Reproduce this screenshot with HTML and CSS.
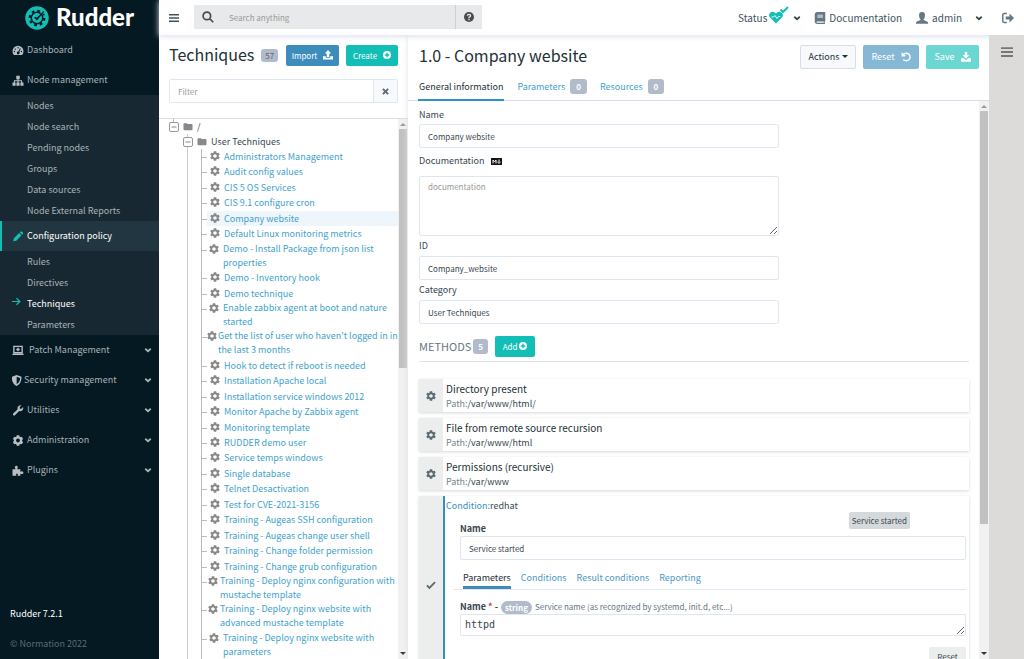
FILE: index.html
```html
<!DOCTYPE html>
<html lang="en">
<head>
<meta charset="utf-8">
<title>Rudder - Techniques</title>
<link rel="stylesheet" href="styles.css">
</head>
<body>
<svg class="sprite" aria-hidden="true">
  <symbol id="cog" viewBox="0 0 512 512"><path d="M487.4 315.7l-42.6-24.6c4.3-23.2 4.3-47 0-70.2l42.6-24.6c4.9-2.8 7.1-8.6 5.5-14-11.1-35.6-30-67.8-54.7-94.6-3.8-4.1-10-5.1-14.8-2.3L380.8 110c-17.9-15.4-38.5-27.3-60.8-35.1V25.8c0-5.6-3.9-10.5-9.4-11.7-36.7-8.2-74.3-7.8-109.2 0-5.5 1.2-9.4 6.1-9.4 11.7V75c-22.2 7.9-42.8 19.8-60.8 35.1L88.7 85.5c-4.9-2.8-11-1.9-14.8 2.3-24.7 26.7-43.6 58.9-54.7 94.6-1.7 5.4.6 11.2 5.5 14L67.3 221c-4.3 23.2-4.3 47 0 70.2l-42.6 24.6c-4.9 2.8-7.1 8.6-5.5 14 11.1 35.6 30 67.8 54.7 94.6 3.8 4.1 10 5.1 14.8 2.3l42.6-24.6c17.9 15.4 38.5 27.3 60.8 35.1v49.2c0 5.6 3.9 10.5 9.4 11.7 36.7 8.2 74.3 7.8 109.2 0 5.5-1.2 9.4-6.1 9.4-11.7v-49.2c22.2-7.9 42.8-19.8 60.8-35.1l42.6 24.6c4.9 2.8 11 1.9 14.8-2.3 24.7-26.7 43.6-58.9 54.7-94.6 1.5-5.5-.7-11.3-5.6-14.1zM256 346c-50 0-90-40-90-90s40-90 90-90 90 40 90 90-40 90-90 90z"/></symbol>
  <symbol id="chevron" viewBox="0 0 16 16"><path d="M2.5 5.5 8 10.5l5.5-5" fill="none" stroke="currentColor" stroke-width="3.4"/></symbol>
  <symbol id="folder" viewBox="0 0 16 16"><path d="M0 3.600Q0 2 1.600 2h4Q7 2 7 3.600h7.400Q16 3.600 16 5v8q0 1.500-1.600 1.500H1.600Q0 14.500 0 13z"/></symbol>
  <symbol id="plus-circle" viewBox="0 0 16 16"><path fill-rule="evenodd" d="M8 0a8 8 0 1 0 0 16A8 8 0 0 0 8 0zM6.600 3.500h2.800v3.100h3.100v2.800H9.400v3.100H6.600V9.400H3.500V6.600h3.100z"/></symbol>
  <symbol id="bars" viewBox="0 0 16 16"><path d="M0 1.500h16v2.600H0zM0 6.700h16v2.600H0zM0 11.900h16v2.600H0z"/></symbol>
  <symbol id="toggle" viewBox="0 0 10 10"><rect x=".5" y=".5" width="9" height="9" rx="1.500" fill="#fff" stroke="#999"/><path d="M2.500 5h5" stroke="#888"/></symbol>
</svg>

<div class="app">
  <aside class="sidebar">
    <a class="brand" href="#">
      <svg class="brand-mark" viewBox="0 0 48 48"><circle cx="24" cy="24" r="23.500" fill="#13beb7"/><g fill="none" stroke="#041922"><circle cx="24" cy="24" r="14.500" stroke-width="4.500" stroke-dasharray="5.500 5.890"/><circle cx="24" cy="24" r="11.500" stroke-width="3"/></g><path d="M26 22 38 7l5 5z" fill="#13beb7"/><path d="m24 29-6-6 3-1.500 2.500 2L37 10l1.500 1.500L28 24z" fill="#041922"/></svg>
      <span>Rudder</span>
    </a>
    <nav class="menu">
      <a class="item" href="#"><svg class="ico" viewBox="0 0 16 16"><path fill-rule="evenodd" d="M2 14.500a8 8 0 1 1 12 0zM8 3a1 1 0 1 0 0 2 1 1 0 0 0 0-2zM4 5a1 1 0 1 0 0 2 1 1 0 0 0 0-2zM2.800 8.500a1 1 0 1 0 0 2 1 1 0 0 0 0-2zM13 8.500a1 1 0 1 0 0 2 1 1 0 0 0 0-2zM10.800 4.600 8.500 9.500a2 2 0 1 0 1.300.600l2.200-5z"/></svg><span>Dashboard</span></a>
      <a class="item" href="#"><svg class="ico" viewBox="0 0 16 16"><path d="M5.500 1h5v5H8.800v1.700H14V11h2v4.500h-4.500V11h1V9.200H8.800V11h1.500v4.500H5.700V11h1.500V9.200H3.500V11h1v4.500H0V11h2V7.700h5.200V6H5.500z"/></svg><span>Node management</span></a>
      <div class="submenu">
        <a href="#">Nodes</a><a href="#">Node search</a><a href="#">Pending nodes</a><a href="#">Groups</a><a href="#">Data sources</a><a href="#">Node External Reports</a>
      </div>
      <a class="item active" href="#"><svg class="ico" viewBox="0 0 16 16"><path d="m1 15 1-4.500L9.500 3 13 6.500 5.500 14zM10.500 2l1-1q1.200-1 2.400 0l1.200 1.200q1 1.200 0 2.300l-1 1z"/></svg><span>Configuration policy</span></a>
      <div class="submenu">
        <a href="#">Rules</a><a href="#">Directives</a><a class="current" href="#"><svg viewBox="0 0 16 16"><path d="M0 8h14M8 2l6 6-6 6" fill="none" stroke="currentColor" stroke-width="2.200"/></svg>Techniques</a><a href="#">Parameters</a>
      </div>
      <a class="item" href="#"><svg class="ico" viewBox="0 0 16 16"><path d="M2 2h12v9H2zM0 13.500h16M8 4v5M5.500 6.500h5" fill="none" stroke="currentColor" stroke-width="2"/></svg><span class="spaced">Patch Management</span><svg class="chev"><use href="#chevron"/></svg></a>
      <a class="item snug" href="#"><svg class="ico" viewBox="2 0 13 16"><path fill-rule="evenodd" d="M8 0l7 2.500Q15.500 12 8 16 .5 12 1 2.500zM8 2.500v11Q13 10 13 4.200z"/></svg><span>Security management</span><svg class="chev"><use href="#chevron"/></svg></a>
      <a class="item" href="#"><svg class="ico" viewBox="0 0 16 16"><path d="M1 12.500 7.300 6.700Q6.500 3.500 8.800 1.500 10.800 0 13 .6L10.500 3v2.500H13L15.500 3q.7 2.500-1 4.500-2 2-4.800 1.200L3.500 15q-1.200 1-2.300 0-1.200-1.300-.2-2.500z"/></svg><span>Utilities</span><svg class="chev"><use href="#chevron"/></svg></a>
      <a class="item" href="#"><svg class="ico"><use href="#cog"/></svg><span>Administration</span><svg class="chev"><use href="#chevron"/></svg></a>
      <a class="item" href="#"><svg class="ico" viewBox="0 0 16 16"><path d="M0 6h4.500Q3 4 3.500 2.500 4.500.7 6.300 1.200 8 2 7.500 4L6.800 6h4.700v4q2-1.500 3.500-.5 1.500 1.500.5 3-1.500 1.500-4 0V15.500H7.500q1-3-1-3t-1 3H0z"/></svg><span>Plugins</span><svg class="chev"><use href="#chevron"/></svg></a>
    </nav>
    <footer class="side-foot"><strong>Rudder 7.2.1</strong><span>© Normation 2022</span></footer>
  </aside>

  <div class="page">
    <header class="topbar">
      <button class="plain" type="button" aria-label="Toggle menu"><svg class="i10"><use href="#bars"/></svg></button>
      <form class="search">
        <label for="q" aria-label="Search"><svg class="i12" viewBox="0 0 16 16"><path d="M6.500 1.500a5 5 0 1 0 0 10 5 5 0 0 0 0-10zM10 10l5 5" fill="none" stroke="currentColor" stroke-width="2.300"/></svg></label>
        <input id="q" type="text" placeholder="Search anything">
        <button type="button" aria-label="Help"><svg class="i10" viewBox="0 0 16 16"><circle cx="8" cy="8" r="8"/><path d="M5.500 6Q5.500 3.700 8 3.700T10.500 6Q10.500 7.200 8 8.500V10M8 11v2.300" fill="none" stroke="#e8e9ea" stroke-width="2.200"/></svg></button>
      </form>
      <nav class="toplinks">
        <a class="status" href="#"><span>Status</span><svg viewBox="0 0 20 18"><path d="M7 17.500 1 11.500Q-.8 9 1 7 4 4.500 7 7.500 10 4.500 13 7q1.800 2 0 4.500z" fill="#13beb7"/><path d="M2.500 11h2L6 9.500l2 3 1.500-2H11.500" fill="none" stroke="#fff" stroke-width=".9"/><path d="m11.500 3.500 2.500 2.500L19 1" fill="none" stroke="#13beb7" stroke-width="2"/></svg><svg class="chev"><use href="#chevron"/></svg></a>
        <a class="docs" href="#"><svg class="i12" viewBox="0 0 16 16"><path fill-rule="evenodd" d="M4 0h11v12l-.7.800v1.700L15 16H4Q1 15.500 1 13V3Q1 .5 4 0zM4.500 3.500v1.200h7.500V3.500zM4.500 6v1.200h7.500V6zM4 12.500q-1.500.8 0 1.700h9v-1.700z"/></svg><span>Documentation</span></a>
        <a class="user" href="#"><svg class="i12" viewBox="0 0 16 16"><path d="M8 0q4 0 4 4.500 0 3-2 5v1q5 1.500 6 3v2H0v-2q1-1.500 6-3v-1q-2-2-2-5Q4 0 8 0z"/></svg><span>admin</span><svg class="chev"><use href="#chevron"/></svg></a>
        <a href="#" aria-label="Log out"><svg class="i12" viewBox="0 0 16 16"><path d="M6.500 2H3Q1 2 1 4v8q0 2 2 2h3.500" fill="none" stroke="currentColor" stroke-width="2"/><path d="M5 6h5V2l6 6-6 6v-4H5z"/></svg></a>
      </nav>
    </header>

    <div class="columns">
      <section class="techniques">
        <div class="tech-head">
          <h1>Techniques</h1><span class="count">57</span>
          <button class="btn blue" type="button">Import <svg class="i10" viewBox="0 0 16 16"><path d="M8 0l5 5.500H10V11H6V5.500H3zM0 10h4.500v2.500h7V10H16v5H0z"/></svg></button>
          <button class="btn teal" type="button">Create <svg class="i8"><use href="#plus-circle"/></svg></button>
        </div>
        <div class="filter"><input type="text" placeholder="Filter" aria-label="Filter techniques"><button type="button" aria-label="Clear filter"><svg viewBox="0 0 16 16"><path d="m2 2 12 12M14 2 2 14" stroke="currentColor" stroke-width="4.500"/></svg></button></div>
        <div class="scroller">
          <div class="tree">
            <div class="root"><button type="button" aria-label="Collapse /"><svg><use href="#toggle"/></svg></button><svg class="fold"><use href="#folder"/></svg><span>/</span></div>
            <div class="branch">
              <div class="root"><button type="button" aria-label="Collapse User Techniques"><svg><use href="#toggle"/></svg></button><svg class="fold"><use href="#folder"/></svg><span>User Techniques</span></div>
              <ul class="leaves">
                <li><svg><use href="#cog"/></svg><a href="#">Administrators Management</a></li>
                <li><svg><use href="#cog"/></svg><a href="#">Audit config values</a></li>
                <li><svg><use href="#cog"/></svg><a href="#">CIS 5 OS Services</a></li>
                <li><svg><use href="#cog"/></svg><a href="#">CIS 9.1 configure cron</a></li>
                <li class="selected"><svg><use href="#cog"/></svg><a href="#">Company website</a></li>
                <li><svg><use href="#cog"/></svg><a href="#">Default Linux monitoring metrics</a></li>
                <li class="wrap"><svg><use href="#cog"/></svg><a href="#">Demo - Install Package from json list properties</a></li>
                <li><svg><use href="#cog"/></svg><a href="#">Demo - Inventory hook</a></li>
                <li><svg><use href="#cog"/></svg><a href="#">Demo technique</a></li>
                <li class="wrap"><svg><use href="#cog"/></svg><a href="#">Enable zabbix agent at boot and nature started</a></li>
                <li class="wrap tightest"><svg><use href="#cog"/></svg><a href="#">Get the list of user who haven't logged in in the last 3 months</a></li>
                <li><svg><use href="#cog"/></svg><a href="#">Hook to detect if reboot is needed</a></li>
                <li><svg><use href="#cog"/></svg><a href="#">Installation Apache local</a></li>
                <li><svg><use href="#cog"/></svg><a href="#">Installation service windows 2012</a></li>
                <li><svg><use href="#cog"/></svg><a href="#">Monitor Apache by Zabbix agent</a></li>
                <li><svg><use href="#cog"/></svg><a href="#">Monitoring template</a></li>
                <li><svg><use href="#cog"/></svg><a href="#">RUDDER demo user</a></li>
                <li><svg><use href="#cog"/></svg><a href="#">Service temps windows</a></li>
                <li><svg><use href="#cog"/></svg><a href="#">Single database</a></li>
                <li><svg><use href="#cog"/></svg><a href="#">Telnet Desactivation</a></li>
                <li><svg><use href="#cog"/></svg><a href="#">Test for CVE-2021-3156</a></li>
                <li><svg><use href="#cog"/></svg><a href="#">Training - Augeas SSH configuration</a></li>
                <li><svg><use href="#cog"/></svg><a href="#">Training - Augeas change user shell</a></li>
                <li><svg><use href="#cog"/></svg><a href="#">Training - Change folder permission</a></li>
                <li><svg><use href="#cog"/></svg><a href="#">Training - Change grub configuration</a></li>
                <li class="wrap tight"><svg><use href="#cog"/></svg><a href="#">Training - Deploy nginx configuration with mustache template</a></li>
                <li class="wrap tight"><svg><use href="#cog"/></svg><a href="#">Training - Deploy nginx website with advanced mustache template</a></li>
                <li class="wrap"><svg><use href="#cog"/></svg><a href="#">Training - Deploy nginx website with parameters</a></li>
              </ul>
            </div>
          </div>
          <div class="bar" aria-hidden="true"><i class="up"></i><i class="thumb short"></i><i class="down"></i></div>
        </div>
      </section>

      <main class="detail">
        <div class="detail-head">
          <h1>1.0 - Company website</h1>
          <button class="btn tall light" type="button">Actions<i class="caret"></i></button>
          <button class="btn tall blue faded" type="button">Reset <svg class="i10" viewBox="0 0 16 16"><path d="M2 1v5h5M2.500 5.500Q5 2 8.500 2q5.500.3 6 6-.3 5.500-6 6-3 0-5-2" fill="none" stroke="currentColor" stroke-width="2.200"/></svg></button>
          <button class="btn tall teal faded" type="button">Save <svg class="i10" viewBox="0 0 16 16"><path d="M6 0h4v5h3.500L8 10.500 2.500 5H6zM0 10h4.500L8 13l3.500-3H16v5.500H0z"/></svg></button>
        </div>
        <nav class="tabs"><a class="on" href="#">General information</a><a href="#">Parameters <span class="count">0</span></a><a href="#">Resources <span class="count">0</span></a></nav>
        <div class="scroller">
          <div class="body">
            <form class="general">
              <label for="name">Name</label>
              <input id="name" type="text" value="Company website">
              <label for="doc">Documentation <svg class="md" viewBox="0 0 22 14"><rect width="22" height="14" rx="1"/><path d="M4 11V4l3 3.500L10 4v7M16 3v5M13 7.500l3 3.500 3-3.500" fill="none" stroke="#fff" stroke-width="2"/></svg></label>
              <textarea id="doc" placeholder="documentation"></textarea>
              <label for="tid">ID</label>
              <input id="tid" type="text" value="Company_website">
              <label for="cat">Category</label>
              <input id="cat" type="text" value="User Techniques">
            </form>
            <div class="methods-head"><h2>METHODS</h2><span class="count">5</span><button class="btn teal add" type="button">Add <svg class="i8"><use href="#plus-circle"/></svg></button></div>
            <div class="methods">
              <article class="method"><div class="handle"><svg class="i10"><use href="#cog"/></svg></div><div class="info"><h3>Directory present</h3><p><span>Path:</span>/var/www/html/</p></div></article>
              <article class="method"><div class="handle"><svg class="i10"><use href="#cog"/></svg></div><div class="info"><h3>File from remote source recursion</h3><p><span>Path:</span>/var/www/html</p></div></article>
              <article class="method"><div class="handle"><svg class="i10"><use href="#cog"/></svg></div><div class="info"><h3>Permissions (recursive)</h3><p><span>Path:</span>/var/www</p></div></article>
              <article class="method open">
                <div class="handle"><svg class="i10" viewBox="0 0 16 16"><path d="m1.500 8.500 4 4 9-9" fill="none" stroke="currentColor" stroke-width="3"/></svg></div>
                <div class="editor">
                  <p class="cond"><span>Condition:</span>redhat</p>
                  <div class="name-row"><label for="mname">Name</label><span class="tag">Service started</span></div>
                  <input id="mname" type="text" value="Service started">
                  <nav class="subtabs"><a class="on" href="#">Parameters</a><a href="#">Conditions</a><a href="#">Result conditions</a><a href="#">Reporting</a></nav>
                  <label class="param" for="svc"><b>Name <em>*</em> -</b><span class="pill">string</span><span class="hint">Service name (as recognized by systemd, init.d, etc...)</span></label>
                  <textarea id="svc" class="mono">httpd</textarea>
                  <button class="reset" type="button">Reset</button>
                </div>
              </article>
            </div>
          </div>
          <div class="bar" aria-hidden="true"><i class="up"></i><i class="thumb"></i><i class="down"></i></div>
        </div>
      </main>

      <aside class="rail"><button class="plain" type="button" aria-label="Open panel"><svg class="i12"><use href="#bars"/></svg></button></aside>
    </div>
  </div>
</div>
</body>
</html>
```
FILE: styles.css
```css
* { box-sizing: border-box; }
body, h1, h2, h3, p, ul { margin: 0; padding: 0; }
body, input, textarea, button { font-family: "Noto Sans CJK SC", "Open Sans", sans-serif; }
body { font-size: 9px; line-height: 14px; color: #36474f; background: #fff; }
a { color: inherit; text-decoration: none; }
button { cursor: pointer; }
svg { fill: currentColor; flex: none; }
.sprite { position: absolute; width: 0; height: 0; }
.i8 { width: 8px; height: 8px; }
.i10 { width: 10px; height: 10px; }
.i12 { width: 12px; height: 12px; }
.chev { width: 8px; height: 8px; }
.plain { border: 0; background: none; padding: 0; display: flex; color: #41545e; }

.app { display: flex; height: 100vh; overflow: hidden; }

/* Sidebar */
.sidebar { width: 159px; flex: none; display: flex; flex-direction: column; background: #041922; color: #a9b3b7; }
.brand { height: 35px; padding-left: 25px; display: flex; align-items: center; gap: 7px; color: #fff; font: 900 24px/32px Lato, sans-serif; }
.brand span { padding-bottom: 2px; }
.brand-mark { width: 24px; height: 24px; }
.item { height: 30px; padding: 0 7px 0 12px; display: flex; align-items: center; gap: 3px; }
.item span { flex: 1; }
.item .ico { width: 12px; height: 11px; color: #b8bfc2; }
.item.snug { gap: 2px; }
.item.snug .ico { width: 10px; }
.item .spaced { padding-left: 2px; }
.item.active { background: #213640; color: #fff; border-left: 2px solid #13beb7; padding-left: 10px; }
.item.active .ico { color: #13beb7; }
.submenu { background: #172832; display: flex; flex-direction: column; }
.submenu a { height: 21px; padding-left: 27px; line-height: 21px; }
.submenu .current { display: flex; align-items: center; gap: 6px; padding-left: 12px; color: #fff; }
.current svg { width: 9px; height: 9px; margin-bottom: 4px; color: #13beb7; }
.side-foot { margin-top: auto; padding: 0 10px 8px; display: flex; flex-direction: column; gap: 16px; color: #5b6b73; }
.side-foot strong { color: #fff; font-weight: 400; }

/* Top bar */
.page { flex: 1; min-width: 0; display: flex; flex-direction: column; }
.topbar { height: 35px; flex: none; padding: 0 10px; display: flex; align-items: center; font-size: 10px; box-shadow: 0 1px 6px #d9deeb; z-index: 1; background: #fff; }
.search { display: flex; width: 288px; height: 24px; margin: 0 0 1px 15px; background: #e8e9ea; color: #4b4b4b; }
.search label { width: 28px; display: flex; align-items: center; justify-content: center; }
.search input { flex: 1; min-width: 0; border: 0; padding: 0 7px; background: none; font-size: 8px; }
.search button { width: 27px; border: 0; border-left: 1px solid #cfcfcf; background: none; color: #4b4b4b; display: flex; align-items: center; justify-content: center; padding: 0; }
::placeholder { color: #999; opacity: 1; }
.toplinks { margin-left: auto; display: flex; align-items: center; color: #647785; }
.toplinks a { display: flex; align-items: center; }
.toplinks span { color: #41545e; }
.toplinks .chev { color: #36474f; }
.status { gap: 2px; margin-right: 13px; }
.status svg:nth-child(2) { width: 20px; height: 18px; margin-bottom: 6px; }
.status .chev { margin-left: 2px; }
.docs { gap: 3px; margin-right: 14px; }
.user { gap: 4px; margin-right: 19px; }
.user .chev { margin-left: 9px; }

.columns { flex: 1; min-height: 0; display: flex; }
h1 { font-size: 16px; font-weight: 400; line-height: 24px; color: #233036; white-space: nowrap; }
.count { background: #b1bbcb; color: #fff; border-radius: 3px; padding: 0 6px; font-size: 8px; line-height: 15px; font-weight: 700; }
.btn { height: 21px; border: 0; border-radius: 2px; padding: 0; display: flex; align-items: center; justify-content: center; gap: 6px; font-size: 8px; color: #fff; }
.btn.tall { width: 56px; height: 24px; font-size: 9px; }
.blue { background: #3c8dbc; }
.teal { background: #13beb7; }
.btn.light { background: #f8f9fc; border: 1px solid #d9dde5; color: #233036; gap: 2px; }
.btn.tall.teal { width: 53px; }
.faded { opacity: .62; }
.caret { border: 3px solid transparent; border-top-color: currentColor; border-bottom: 0; }

/* Techniques list */
.techniques { width: 249px; flex: none; display: flex; flex-direction: column; }
.tech-head { display: flex; align-items: center; padding: 6px 10px 0; height: 33px; }
.tech-head h1 { margin-bottom: 1px; }
.tech-head .btn { margin-top: 1px; }
.tech-head .count { margin: 2px 0 0 7px; line-height: 13px; padding: 0 4px; color: #666; font-weight: 400; }
.tech-head .blue { margin-left: auto; width: 53px; }
.tech-head .teal { margin-left: 7px; width: 52px; }
.filter { display: flex; height: 24px; margin: 11px 10px 15px; border: 1px solid #dfe6f3; border-radius: 2px; }
.filter input { flex: 1; min-width: 0; border: 0; padding: 0 8px; font-size: 8px; }
.filter button { width: 24px; display: flex; align-items: center; justify-content: center; border: 0; border-left: 1px solid #dfe6f3; background: #f8f9fc; color: #5c6b78; padding: 0; }
.filter svg { width: 7px; height: 7px; }
.scroller { flex: 1; min-height: 0; display: flex; border-top: 1px solid #d6deeb; overflow: hidden; }
.bar { width: 10px; flex: none; display: flex; flex-direction: column; align-items: center; background: #f1f1f1; padding: 4px 1px; }
.bar .up, .bar .down { border: 3px solid transparent; }
.bar .up { border-bottom-color: #999; border-top: 0; }
.bar .down { border-top-color: #333; border-bottom: 0; margin-top: auto; }
.thumb { width: 8px; height: 75%; margin-top: 3px; background: #c1c1c1; }
.thumb.short { height: 45%; }
.tree { flex: 1; min-width: 0; padding-left: 10px; display: flex; flex-direction: column; background: linear-gradient(#bbb, #bbb) 14px 0 / 1px 4px no-repeat; }
.root { height: 15px; display: flex; align-items: center; gap: 4px; }
.root button { border: 0; background: none; padding: 0; display: flex; }
.root button svg { width: 10px; height: 10px; }
.fold { width: 10px; height: 9px; color: #888; }
.branch { flex: 1; margin-left: 14px; display: flex; flex-direction: column; background: linear-gradient(#ccc, #ccc) 4px 0 / 1px 100% no-repeat; }
.leaves { flex: 1; list-style: none; margin-left: 18px; border-left: 1px solid #bbb; display: flex; flex-direction: column; justify-content: space-between; color: #3fa2cc; }
.leaves li { display: flex; align-items: flex-start; padding-left: 8px; gap: 4px; line-height: 15px; background: linear-gradient(#bbb, #bbb) 0 8px / 5px 1px no-repeat; }
.leaves svg { width: 10px; height: 10px; margin-top: 2px; color: #888; }
.leaves .selected { background: linear-gradient(#bbb, #bbb) 0 8px / 5px 1px no-repeat, linear-gradient(#eef6fb, #eef6fb) 5px 0 no-repeat; }
.leaves .wrap { line-height: 14px; padding-left: 7px; gap: 4px; }
.leaves .tight { padding-left: 6px; gap: 2px; }
.leaves .tightest { padding-left: 5px; gap: 1px; }

/* Technique detail */
.detail { flex: 1; min-width: 0; display: flex; flex-direction: column; box-shadow: 0 0 6px #dde3e8; }
.detail-head { display: flex; align-items: center; gap: 7px; padding: 9px 10px 0 11px; height: 34px; }
.detail-head h1 { margin: 0 auto 4px 0; }
.tabs { display: flex; gap: 13px; padding-left: 10px; margin-top: 5px; color: #3fa2cc; z-index: 1; }
.tabs a { display: flex; align-items: center; gap: 5px; height: 27px; border-bottom: 2px solid transparent; }
.tabs .on { color: #233036; border-color: #2d95c5; padding: 0 1px; }
.detail .scroller { margin-top: -1px; }
.tabs { position: relative; }
.body { flex: 1; min-width: 0; padding: 7px 10px 0 11px; }
.general { max-width: 360px; display: flex; flex-direction: column; }
.general label { line-height: 14px; display: flex; align-items: center; gap: 7px; }
.md { width: 11px; height: 7px; fill: #111; }
.body input, .body textarea { height: 24px; border: 1px solid #dfe6f3; border-radius: 2px; padding: 0 8px; font-size: 8px; color: #36474f; background: #fff; }
.general input { margin: 2px 0 6px; }
.body #doc { height: 60px; padding: 4px 8px; margin: 8px 0 3px; line-height: 12px; }
.general #tid, .general #cat { margin: 3px 0; }
.methods-head { display: flex; align-items: center; height: 31px; margin-top: 4px; border-bottom: 1px solid #dfe3ee; }
h2 { font-size: 11px; font-weight: 400; color: #647785; margin-right: 2px; }
.methods-head .count { padding: 0 5px; }
.add { width: 40px; margin-left: 7px; gap: 2px; }
.methods { margin-top: 17px; display: flex; flex-direction: column; gap: 6px; }
.method { display: flex; min-height: 33px; box-shadow: 0 1px 3px #d5d7dd; }
.handle { width: 24px; flex: none; background: #eceeee; display: flex; align-items: center; justify-content: center; color: #5c6b70; }
.info { padding: 2px 3px 1px; }
h3 { font-size: 10px; font-weight: 400; line-height: 16px; color: #233036; }
.info span { color: #75858f; }
.editor { flex: 1; min-width: 0; border-left: 2px solid #3c8dbc; padding: 3px 3px 8px 1px; display: flex; flex-direction: column; }
.cond span { color: #3c8dbc; }
.name-row, .editor input, .editor textarea, .param { margin-left: 14px; }
.name-row { display: flex; align-items: flex-end; justify-content: space-between; height: 23px; font-weight: 700; }
.tag { margin-right: 56px; padding: 0 3px; height: 17px; line-height: 17px; margin-bottom: 7px; border-radius: 2px; background: #d5d9dc; font-size: 8px; font-weight: 400; }
.subtabs { display: flex; gap: 10px; margin: 10px 0 0 7px; padding-left: 10px; border-bottom: 1px solid #dfe6f3; color: #4c98c4; }
.subtabs a { height: 19px; line-height: 16px; border-bottom: 3px solid transparent; }
.subtabs .on { color: #233036; border-color: #3c8dbc; }
.param { margin-top: 10px; display: flex; align-items: center; gap: 3px; }
.param em { font-style: normal; color: #a94442; }
.pill { background: #b1bbcb; color: #fff; border-radius: 7px; padding: 0 4px; line-height: 13px; font-size: 8px; font-weight: 700; }
.hint { font-size: 8px; color: #66757f; }
.body .mono { height: 22px; padding: 2px 4px; font: 10px/16px "DejaVu Sans Mono", monospace; }
.reset { align-self: flex-end; flex: none; width: 37px; height: 19px; margin-top: 11px; border: 0; border-radius: 2px; background: #eceeee; color: #36474f; font-size: 8px; padding: 0; }

.rail { width: 35px; flex: none; background: #dddada; padding: 11px 0 0 12px; z-index: 1; }
.rail .plain { color: #777; }
```
